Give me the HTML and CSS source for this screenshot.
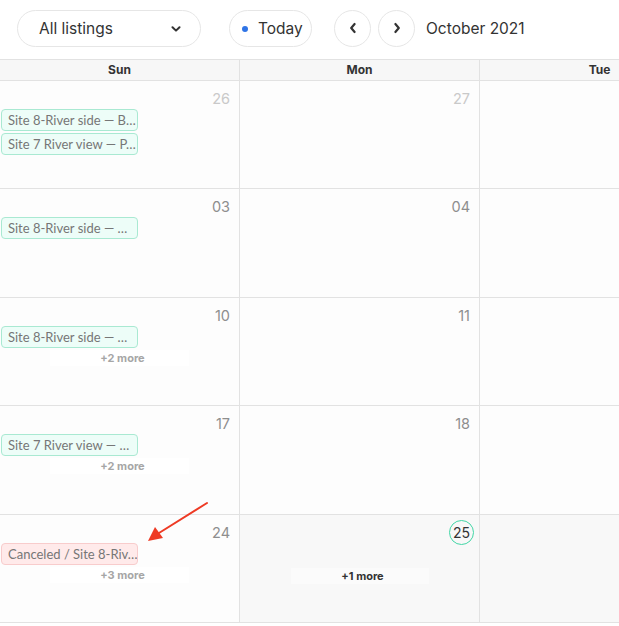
FILE: index.html
```html
<!DOCTYPE html>
<html>
<head>
<link rel="stylesheet" href="styles.css">
<meta charset="UTF-8">
<title>Calendar</title>
</head>
<body>
<div class="toolbar">
	<div class="listing_select">
		<span>All listings</span>
		<svg class="caret" width="10" height="6" viewBox="0 0 10 6"><path d="M1.5 1.2 L5 4.6 L8.5 1.2" fill="none" stroke="#333" stroke-width="2" stroke-linecap="round" stroke-linejoin="round"/></svg>
	</div>
	<div class="today_btn"><i class="dot"></i>Today</div>
	<div class="nav_btns">
		<div class="round_btn"><svg width="8" height="12" viewBox="0 0 8 12"><path d="M5.6 2 L2.2 6 L5.6 10" fill="none" stroke="#333" stroke-width="2.2" stroke-linecap="round" stroke-linejoin="round"/></svg></div>
		<div class="round_btn"><svg width="8" height="12" viewBox="0 0 8 12"><path d="M2.4 2 L5.8 6 L2.4 10" fill="none" stroke="#333" stroke-width="2.2" stroke-linecap="round" stroke-linejoin="round"/></svg></div>
	</div>
	<div class="month_label">October 2021</div>
</div>

<div class="cal">
	<div class="cal_head">
		<div>Sun</div>
		<div>Mon</div>
		<div>Tue</div>
	</div>
	<div class="cal_body">
		<!-- row 1 -->
		<div class="day past">
			<div class="num faded">26</div>
			<div class="chip">Site 8-River side — B…</div>
			<div class="chip">Site 7 River view — P…</div>
		</div>
		<div class="day past"><div class="num faded">27</div></div>
		<div class="day past"></div>
		<!-- row 2 -->
		<div class="day past">
			<div class="num">03</div>
			<div class="chip">Site 8-River side — …</div>
		</div>
		<div class="day past"><div class="num">04</div></div>
		<div class="day past"></div>
		<!-- row 3 -->
		<div class="day past">
			<div class="num">10</div>
			<div class="chip">Site 8-River side — …</div>
			<div class="more">+2 more</div>
		</div>
		<div class="day past"><div class="num">11</div></div>
		<div class="day past"></div>
		<!-- row 4 -->
		<div class="day past">
			<div class="num">17</div>
			<div class="chip">Site 7 River view — …</div>
			<div class="more">+2 more</div>
		</div>
		<div class="day past"><div class="num">18</div></div>
		<div class="day past"></div>
		<!-- row 5 -->
		<div class="day past">
			<div class="num">24</div>
			<div class="chip canceled">Canceled / Site 8-Riv…</div>
			<div class="more">+3 more</div>
		</div>
		<div class="day">
			<div class="num today"><span>25</span></div>
			<div class="chip_space"></div>
			<div class="more dark">+1 more</div>
		</div>
		<div class="day"></div>
	</div>
</div>

<svg class="arrow" width="80" height="60" viewBox="0 0 80 60">
	<line x1="68" y1="3" x2="20" y2="33" stroke="#ee3a24" stroke-width="2" stroke-linecap="round"/>
	<polygon points="9,41 16,27 24,38" fill="#ee3a24"/>
</svg>
</body>
</html>
```

FILE: styles.css
```css
html, body {
	margin: 0;
	padding: 0;
	overflow: hidden;
	background: #fff;
}
body {
	font-family: Inter, "Noto Sans", sans-serif;
	color: #333;
	position: relative;
	width: 619px;
	height: 626px;
}
.toolbar {
	display: flex;
	align-items: center;
	height: 59px;
	padding: 0 0 3px 17px;
	box-sizing: border-box;
}
.listing_select {
	width: 184px;
	height: 37px;
	box-sizing: border-box;
	border: 1px solid #e6e6e6;
	border-radius: 19px;
	display: flex;
	align-items: center;
	justify-content: space-between;
	padding: 0 19px 0 21px;
	font-size: 15.5px;
	color: #333;
}
.caret {
	margin-top: 1px;
}
.today_btn {
	margin-left: 28px;
	height: 37px;
	width: 83px;
	box-sizing: border-box;
	border: 1px solid #e6e6e6;
	border-radius: 19px;
	display: flex;
	align-items: center;
	padding-left: 12px;
	font-size: 15.5px;
}
.dot {
	width: 6px;
	height: 6px;
	border-radius: 50%;
	background: #2f74e6;
	margin-right: 10px;
	margin-top: 2px;
}
.nav_btns {
	display: flex;
	gap: 7px;
	margin-left: 22px;
}
.round_btn {
	width: 37px;
	height: 37px;
	box-sizing: border-box;
	border: 1px solid #e6e6e6;
	border-radius: 50%;
	display: flex;
	align-items: center;
	justify-content: center;
}
.month_label {
	margin-left: 11px;
	font-size: 15.5px;
	color: #333;
}

.cal {
	width: 619px;
	overflow: hidden;
}
.cal_head {
	display: grid;
	grid-template-columns: repeat(3, 240px);
	border-top: 1px solid #e2e2e2;
	border-bottom: 1px solid #e2e2e2;
	background: #f7f7f7;
}
.cal_head > div {
	height: 20px;
	line-height: 20px;
	text-align: center;
	font-size: 12px;
	font-weight: 700;
	color: #333;
	border-right: 1px solid #e2e2e2;
}
.cal_body {
	display: grid;
	grid-template-columns: repeat(3, 240px);
	grid-auto-rows: 108.4px;
}
.day {
	border-right: 1px solid #e2e2e2;
	border-bottom: 1px solid #e2e2e2;
	background: #f8f8f8;
	padding-top: 8px;
	overflow: hidden;
}
.day.past {
	background: #fdfdfd;
}
.num {
	height: 20px;
	line-height: 20px;
	text-align: right;
	padding-right: 9px;
	font-size: 14.5px;
	color: #8e8e8e;
}
.num.faded {
	color: #c9c9c9;
}
.num.today span {
	display: inline-block;
	width: 25px;
	height: 25px;
	line-height: 23px;
	box-sizing: border-box;
	border: 1px solid #43d6a6;
	border-radius: 50%;
	text-align: center;
	color: #333;
	margin-top: -3px;
	margin-right: -4px;
	font-size: 14px;
	vertical-align: top;
}
.chip {
	margin: 0 0 2px 1px;
	width: 137px;
	height: 22px;
	line-height: 20px;
	box-sizing: border-box;
	border: 1px solid #a9e9d2;
	background: #edfdf8;
	border-radius: 4px;
	padding: 0 0 0 6px;
	font-family: Lato, "Noto Sans", sans-serif;
	font-size: 13px;
	color: #767676;
	white-space: nowrap;
	overflow: hidden;
}
.day > .chip:first-of-type {
	margin-top: 1px;
}
.chip.canceled {
	border-color: #f8cccc;
	background: #ffeaea;
}
.chip_space {
	height: 25px;
}
.more {
	width: 139px;
	height: 16px;
	line-height: 16px;
	margin: 0 auto;
	background: #fff;
	text-align: center;
	font-size: 11px;
	font-weight: 700;
	color: #a6a6a6;
	padding-left: 6px;
	box-sizing: border-box;
}
.more.dark {
	color: #333;
	background: #fbfbfb;
	width: 138px;
}
.arrow {
	position: absolute;
	left: 139px;
	top: 500px;
}
```
